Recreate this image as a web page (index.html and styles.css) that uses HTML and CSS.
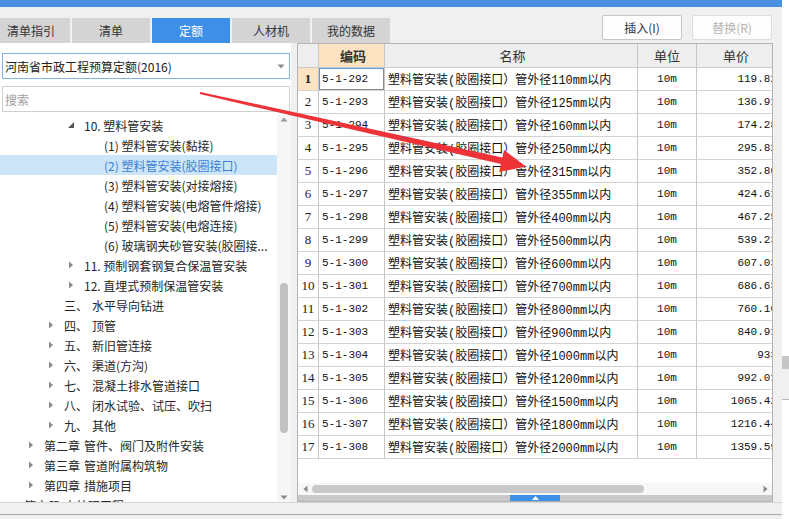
FILE: index.html
```html
<!DOCTYPE html>
<html lang="zh-CN">
<head>
<meta charset="utf-8">
<title>定额</title>
<link rel="stylesheet" href="styles.css">
</head>
<body>
<div class="screen">
  <div class="window">
    <div class="titlebar"></div>
    <div class="topbar">
      <div class="tabs">
        <div class="tab">清单指引</div>
        <div class="tab">清单</div>
        <div class="tab active">定额</div>
        <div class="tab">人材机</div>
        <div class="tab">我的数据</div>
      </div>
      <div class="actions">
        <button class="btn">插入(I)</button>
        <button class="btn disabled">替换(R)</button>
      </div>
    </div>
    <div class="main">
      <aside class="left">
        <div class="select">
          <span>河南省市政工程预算定额(2016)</span>
          <svg class="caret" width="8" height="5" viewBox="0 0 8 5"><path d="M0.5 0.5 L7.5 0.5 L4 4.5Z" fill="#8a8a8a"/></svg>
        </div>
        <div class="search">搜索</div>
        <div class="treewrap">
          <ul class="tree">
            <li class="lv3"><span class="tw"><svg width="8" height="8" viewBox="0 0 8 8"><path d="M6 1 L6 7 L0 7Z" fill="#555"/></svg></span><span>10. 塑料管安装</span></li>
            <li class="lv4"><span class="tw"></span><span>(1) 塑料管安装(黏接)</span></li>
            <li class="lv4 sel"><span class="tw"></span><span>(2) 塑料管安装(胶圈接口)</span></li>
            <li class="lv4"><span class="tw"></span><span>(3) 塑料管安装(对接熔接)</span></li>
            <li class="lv4"><span class="tw"></span><span>(4) 塑料管安装(电熔管件熔接)</span></li>
            <li class="lv4"><span class="tw"></span><span>(5) 塑料管安装(电熔连接)</span></li>
            <li class="lv4"><span class="tw"></span><span>(6) 玻璃钢夹砂管安装(胶圈接...</span></li>
            <li class="lv3"><span class="tw"><svg width="8" height="8" viewBox="0 0 8 8"><path d="M1 0.5 L5 4 L1 7.5Z" fill="#8a8a8a"/></svg></span><span>11. 预制钢套钢复合保温管安装</span></li>
            <li class="lv3"><span class="tw"><svg width="8" height="8" viewBox="0 0 8 8"><path d="M1 0.5 L5 4 L1 7.5Z" fill="#8a8a8a"/></svg></span><span>12. 直埋式预制保温管安装</span></li>
            <li class="lv2"><span class="tw"></span><span class="ord">三、</span><span>水平导向钻进</span></li>
            <li class="lv2"><span class="tw"><svg width="8" height="8" viewBox="0 0 8 8"><path d="M1 0.5 L5 4 L1 7.5Z" fill="#8a8a8a"/></svg></span><span class="ord">四、</span><span>顶管</span></li>
            <li class="lv2"><span class="tw"><svg width="8" height="8" viewBox="0 0 8 8"><path d="M1 0.5 L5 4 L1 7.5Z" fill="#8a8a8a"/></svg></span><span class="ord">五、</span><span>新旧管连接</span></li>
            <li class="lv2"><span class="tw"><svg width="8" height="8" viewBox="0 0 8 8"><path d="M1 0.5 L5 4 L1 7.5Z" fill="#8a8a8a"/></svg></span><span class="ord">六、</span><span>渠道(方沟)</span></li>
            <li class="lv2"><span class="tw"><svg width="8" height="8" viewBox="0 0 8 8"><path d="M1 0.5 L5 4 L1 7.5Z" fill="#8a8a8a"/></svg></span><span class="ord">七、</span><span>混凝土排水管道接口</span></li>
            <li class="lv2"><span class="tw"><svg width="8" height="8" viewBox="0 0 8 8"><path d="M1 0.5 L5 4 L1 7.5Z" fill="#8a8a8a"/></svg></span><span class="ord">八、</span><span>闭水试验、试压、吹扫</span></li>
            <li class="lv2"><span class="tw"><svg width="8" height="8" viewBox="0 0 8 8"><path d="M1 0.5 L5 4 L1 7.5Z" fill="#8a8a8a"/></svg></span><span class="ord">九、</span><span>其他</span></li>
            <li class="lv1"><span class="tw"><svg width="8" height="8" viewBox="0 0 8 8"><path d="M1 0.5 L5 4 L1 7.5Z" fill="#8a8a8a"/></svg></span><span class="ord">第二章</span><span>管件、阀门及附件安装</span></li>
            <li class="lv1"><span class="tw"><svg width="8" height="8" viewBox="0 0 8 8"><path d="M1 0.5 L5 4 L1 7.5Z" fill="#8a8a8a"/></svg></span><span class="ord">第三章</span><span>管道附属构筑物</span></li>
            <li class="lv1"><span class="tw"><svg width="8" height="8" viewBox="0 0 8 8"><path d="M1 0.5 L5 4 L1 7.5Z" fill="#8a8a8a"/></svg></span><span class="ord">第四章</span><span>措施项目</span></li>
            <li class="lv0"><span class="tw"></span><span class="ord">第六册</span><span>水处理工程</span></li>
          </ul>
          <div class="vscroll">
            <svg class="sarrow" width="8" height="5" viewBox="0 0 8 5"><path d="M0.5 4.5 L7.5 4.5 L4 0.5Z" fill="#9a9a9a"/></svg>
            <div class="vtrack"><div class="vthumb"></div></div>
            <svg class="sarrow" width="8" height="5" viewBox="0 0 8 5"><path d="M0.5 0.5 L7.5 0.5 L4 4.5Z" fill="#8a8a8a"/></svg>
          </div>
        </div>
      </aside>
      <section class="right">
        <div class="gridbox">
          <div class="tablewrap">
            <div class="grid">
              <div class="row head">
                <div class="c rn"></div>
                <div class="c code hot">编码</div>
                <div class="c name">名称</div>
                <div class="c unit">单位</div>
                <div class="c price">单价</div>
              </div>
              <div class="row current">
                <div class="c rn">1</div><div class="c code">5-1-292</div><div class="c name">塑料管安装(胶圈接口）管外径110mm以内</div><div class="c unit">10m</div><div class="c price">119.82</div>
              </div>
              <div class="row">
                <div class="c rn">2</div><div class="c code">5-1-293</div><div class="c name">塑料管安装(胶圈接口）管外径125mm以内</div><div class="c unit">10m</div><div class="c price">136.91</div>
              </div>
              <div class="row">
                <div class="c rn">3</div><div class="c code">5-1-294</div><div class="c name">塑料管安装(胶圈接口）管外径160mm以内</div><div class="c unit">10m</div><div class="c price">174.28</div>
              </div>
              <div class="row">
                <div class="c rn">4</div><div class="c code">5-1-295</div><div class="c name">塑料管安装(胶圈接口）管外径250mm以内</div><div class="c unit">10m</div><div class="c price">295.82</div>
              </div>
              <div class="row">
                <div class="c rn">5</div><div class="c code">5-1-296</div><div class="c name">塑料管安装(胶圈接口）管外径315mm以内</div><div class="c unit">10m</div><div class="c price">352.80</div>
              </div>
              <div class="row">
                <div class="c rn">6</div><div class="c code">5-1-297</div><div class="c name">塑料管安装(胶圈接口）管外径355mm以内</div><div class="c unit">10m</div><div class="c price">424.61</div>
              </div>
              <div class="row">
                <div class="c rn">7</div><div class="c code">5-1-298</div><div class="c name">塑料管安装(胶圈接口）管外径400mm以内</div><div class="c unit">10m</div><div class="c price">467.25</div>
              </div>
              <div class="row">
                <div class="c rn">8</div><div class="c code">5-1-299</div><div class="c name">塑料管安装(胶圈接口）管外径500mm以内</div><div class="c unit">10m</div><div class="c price">539.23</div>
              </div>
              <div class="row">
                <div class="c rn">9</div><div class="c code">5-1-300</div><div class="c name">塑料管安装(胶圈接口）管外径600mm以内</div><div class="c unit">10m</div><div class="c price">607.03</div>
              </div>
              <div class="row">
                <div class="c rn">10</div><div class="c code">5-1-301</div><div class="c name">塑料管安装(胶圈接口）管外径700mm以内</div><div class="c unit">10m</div><div class="c price">686.63</div>
              </div>
              <div class="row">
                <div class="c rn">11</div><div class="c code">5-1-302</div><div class="c name">塑料管安装(胶圈接口）管外径800mm以内</div><div class="c unit">10m</div><div class="c price">760.10</div>
              </div>
              <div class="row">
                <div class="c rn">12</div><div class="c code">5-1-303</div><div class="c name">塑料管安装(胶圈接口）管外径900mm以内</div><div class="c unit">10m</div><div class="c price">840.91</div>
              </div>
              <div class="row">
                <div class="c rn">13</div><div class="c code">5-1-304</div><div class="c name">塑料管安装(胶圈接口）管外径1000mm以内</div><div class="c unit">10m</div><div class="c price">933</div>
              </div>
              <div class="row">
                <div class="c rn">14</div><div class="c code">5-1-305</div><div class="c name">塑料管安装(胶圈接口）管外径1200mm以内</div><div class="c unit">10m</div><div class="c price">992.01</div>
              </div>
              <div class="row">
                <div class="c rn">15</div><div class="c code">5-1-306</div><div class="c name">塑料管安装(胶圈接口）管外径1500mm以内</div><div class="c unit">10m</div><div class="c price">1065.42</div>
              </div>
              <div class="row">
                <div class="c rn">16</div><div class="c code">5-1-307</div><div class="c name">塑料管安装(胶圈接口）管外径1800mm以内</div><div class="c unit">10m</div><div class="c price">1216.44</div>
              </div>
              <div class="row">
                <div class="c rn">17</div><div class="c code">5-1-308</div><div class="c name">塑料管安装(胶圈接口）管外径2000mm以内</div><div class="c unit">10m</div><div class="c price">1359.59</div>
              </div>
            </div>
          </div>
          <div class="hscroll">
            <svg class="harrow" width="5" height="8" viewBox="0 0 5 8"><path d="M4.5 0.5 L4.5 7.5 L0.5 4Z" fill="#8a8a8a"/></svg>
            <div class="htrack"><div class="hthumb"></div></div>
            <svg class="harrow" width="5" height="8" viewBox="0 0 5 8"><path d="M0.5 0.5 L0.5 7.5 L4.5 4Z" fill="#8a8a8a"/></svg>
          </div>
          <div class="splitter">
            <div class="handle"><svg width="7" height="4" viewBox="0 0 7 4"><path d="M0 4 L7 4 L3.5 0Z" fill="#fff"/></svg></div>
          </div>
        </div>
      </section>
    </div>
    <div class="statusbar"><div class="rule"></div></div>
  </div>
  <div class="outside">
    <div class="ghost"></div>
    <div class="ghost-body"></div>
  </div>
</div>
<svg class="annot" width="789" height="519" viewBox="0 0 789 519">
  <polygon points="200.2,91.9 502.3,157.6 504,150 526,166.5 499.2,172 500.9,164 199.8,94.1" fill="#ee3338"/>
</svg>
</body>
</html>
```

FILE: styles.css
```css
* { box-sizing: border-box; }
html, body { margin: 0; padding: 0; }
body {
  width: 789px;
  height: 519px;
  overflow: hidden;
  position: relative;
  background: #fff;
  font-family: "Noto Sans CJK SC", "Microsoft YaHei", sans-serif;
  font-size: 12px;
  color: #333;
}
ul { margin: 0; padding: 0; list-style: none; }

.screen { display: flex; height: 519px; }
.window {
  width: 782px;
  flex: none;
  display: flex;
  flex-direction: column;
  background: #f0f0f0;
  overflow: hidden;
}
.outside { flex: 1; background: #fff; padding-top: 356px; }
.ghost { height: 13px; background: #c6c6c6; }
.ghost-body { height: 31px; background: #f0f0f0; border-bottom: 1px solid #b5b5b5; }

.titlebar { height: 7px; background: #4a90e2; }

.topbar {
  height: 36px;
  display: flex;
  justify-content: space-between;
}
.tabs {
  display: flex;
  gap: 2px;
  align-self: flex-end;
  margin-left: -8px;
}
.tab {
  width: 78px;
  height: 25px;
  display: flex;
  align-items: center;
  justify-content: center;
  background: #d4d4d4;
  color: #333;
  font-size: 12px;
}
.tab.active { background: #3d8fe8; color: #fff; }

.actions {
  display: flex;
  gap: 10px;
  padding-top: 8px;
  padding-right: 10px;
}
.btn {
  width: 80px;
  height: 25px;
  border: 1px solid #c6c6c6;
  border-radius: 2px;
  background: #fdfdfd;
  font-family: "Noto Sans CJK SC", sans-serif;
  font-size: 12px;
  color: #333;
  padding: 0;
}
.btn.disabled { color: #b4b4b4; border-color: #dedede; }

.main { height: 459px; display: flex; }

.left {
  width: 291px;
  flex: none;
  background: #fff;
  display: flex;
  flex-direction: column;
}
.select {
  margin: 10px 1px 0 2px;
  height: 26px;
  border: 1px solid #85b3e4;
  display: flex;
  align-items: center;
  justify-content: space-between;
  padding: 0 4px 0 2px;
  color: #222;
  font-size: 12px;
}
.caret { margin-top: 1px; }
.search {
  margin: 7px 1px 0 2px;
  height: 26px;
  border: 1px solid #cfcfcf;
  display: flex;
  align-items: center;
  padding-left: 2px;
  color: #9e9e9e;
}
.treewrap {
  margin-top: 3px;
  flex: 1;
  display: flex;
  overflow: hidden;
}
.tree { width: 277px; flex: none; }
.tree li {
  height: 20px;
  display: flex;
  align-items: center;
  white-space: nowrap;
  color: #262626;
}
.tree li.sel { background: #cce5f8; color: #3b7fd2; }
.lv0 { padding-left: 8px; }
.lv1 { padding-left: 28px; }
.lv2 { padding-left: 48px; }
.lv3 { padding-left: 68px; }
.lv4 { padding-left: 88px; }
.tw { width: 16px; flex: none; display: flex; align-items: center; }
.ord { margin-right: 4px; }

.vscroll {
  width: 14px;
  flex: none;
  display: flex;
  flex-direction: column;
  align-items: center;
  background: #f6f6f6;
}
.sarrow { flex: none; margin: 2px 0; }
.vtrack { flex: 1; width: 100%; display: flex; justify-content: center; }
.vthumb {
  width: 8px;
  height: 150px;
  margin-top: 159px;
  border-radius: 4px;
  background: #c2c2c2;
}

.right {
  flex: 1;
  min-width: 0;
  padding-left: 6px;
  padding-right: 9px;
}
.gridbox {
  height: 100%;
  width: 476px;
  border: 1px solid #b4b4b4;
  background: #fff;
  display: flex;
  flex-direction: column;
}
.tablewrap { flex: 1; min-width: 0; width: 474px; overflow: hidden; }
.grid { width: 483px; }
.row {
  display: grid;
  grid-template-columns: 21px 66px 253px 59px 84px;
  height: 23px;
}
.row.head { height: 24px; }
.c {
  border-right: 1px solid #c6c6c6;
  border-bottom: 1px solid #d3d3d3;
  display: flex;
  align-items: center;
  white-space: nowrap;
  overflow: hidden;
  color: #111;
}
.head .c {
  background: #eeeeee;
  justify-content: center;
  color: #333;
  font-family: "Noto Sans CJK SC", sans-serif;
  font-size: 13px;
  border-bottom-color: #cacaca;
}
.head .c.hot { background: #fde3c1; font-weight: bold; }
.head .c.price { padding-right: 5px; }
.rn {
  justify-content: center;
  font-family: "Liberation Serif", serif;
  font-size: 13px;
  color: #222;
}
.current .rn { background: #fde3c1; font-weight: bold; }
.code {
  padding-left: 3px;
  font-family: "Liberation Mono", monospace;
  font-size: 11px;
}
.current .code { box-shadow: inset 1px 1px 0 #5f97d9, inset -1px -1px 0 #8a8a8a; }
.name {
  padding-left: 3px;
  font-family: "Liberation Mono", "Noto Sans CJK SC", monospace;
  font-size: 12px;
}
.unit {
  justify-content: center;
  font-family: "Liberation Mono", monospace;
  font-size: 11px;
}
.price {
  justify-content: flex-end;
  padding-right: 3px;
  font-family: "Liberation Mono", monospace;
  font-size: 11px;
}

.hscroll {
  height: 12px;
  flex: none;
  display: flex;
  align-items: center;
  background: #f7f7f7;
}
.harrow { flex: none; margin: 0 4px 0 5px; }
.htrack { flex: 1; display: flex; align-items: center; }
.hthumb { width: 332px; height: 8px; border-radius: 4px; background: #c8c8c8; }
.splitter {
  height: 6px;
  flex: none;
  background: #c9c9c9;
  display: flex;
}
.handle {
  margin-left: 212px;
  width: 50px;
  height: 6px;
  background: #3d8fe8;
  display: flex;
  align-items: center;
  justify-content: center;
}

.statusbar {
  height: 17px;
  flex: none;
  border-top: 1px solid #d6d6d6;
  background: #f0f0f0;
}
.rule { margin-top: 11px; height: 1px; background: #a9a9a9; }

.annot {
  position: absolute;
  left: 0;
  top: 0;
  pointer-events: none;
}
```
